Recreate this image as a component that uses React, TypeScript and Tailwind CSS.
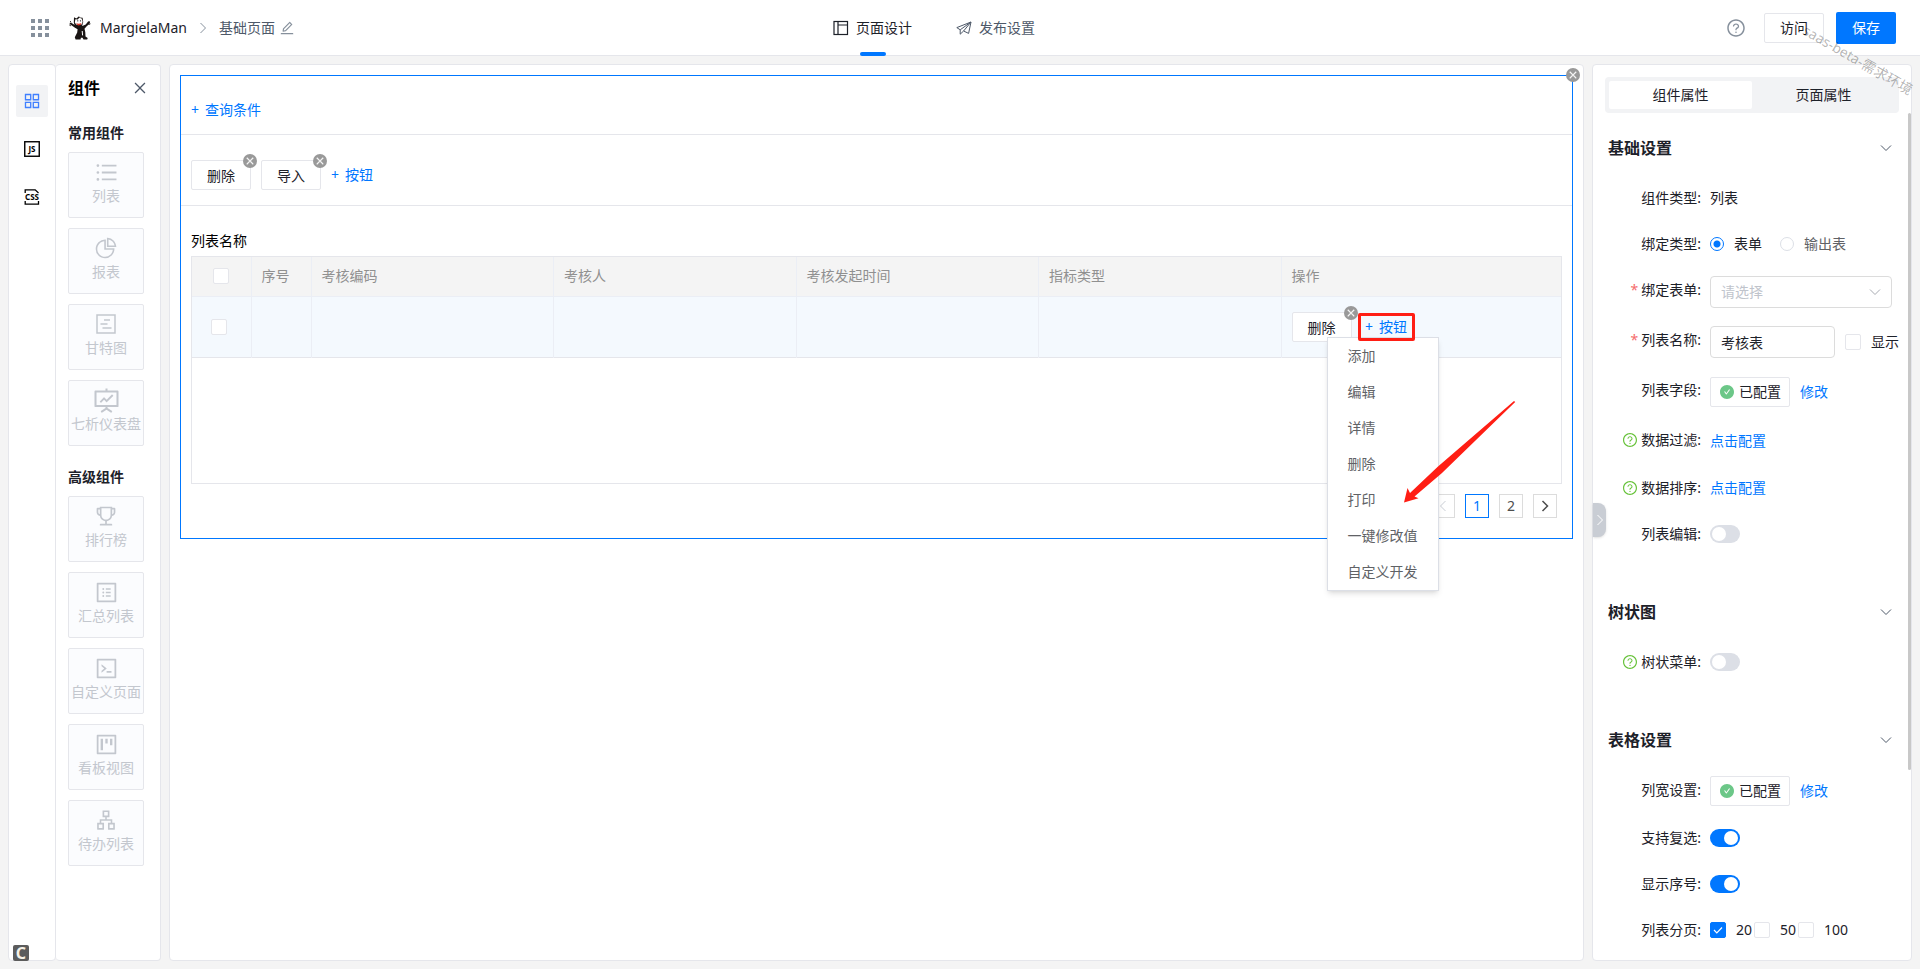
import React from 'react';
import clsx from 'clsx';
import {
  AiFillCheckCircle,
  AiOutlineApartment,
  AiOutlineAppstore,
  AiOutlineClose,
  AiOutlineCode,
  AiOutlineEdit,
  AiOutlineFundProjectionScreen,
  AiOutlinePieChart,
  AiOutlineProfile,
  AiOutlineProject,
  AiOutlineQuestionCircle,
  AiOutlineTrophy,
  AiOutlineUnorderedList,
} from 'react-icons/ai';

const Chevron: React.FC<{ className?: string }> = ({ className }) => (
  <svg className={className} width="12" height="12" viewBox="0 0 12 12" fill="none" stroke="currentColor">
    <path d="m1 3.500 5 5 5-5" />
  </svg>
);

const GanttIcon: React.FC = () => (
  <svg width="20" height="20" viewBox="0 0 20 20" fill="none" stroke="currentColor" strokeWidth="1.5">
    <rect x="1" y="1" width="18" height="18" />
    <path d="M8 6h6M4.500 10h7M6.500 14h9" />
  </svg>
);

const LayoutIcon: React.FC = () => (
  <svg width="16" height="16" viewBox="0 0 16 16" fill="none" stroke="currentColor" strokeWidth="1.2">
    <rect x="1" y="1.500" width="13.500" height="13" />
    <path d="M5 1.500v13M5 5h9.500" />
  </svg>
);

const PlaneIcon: React.FC = () => (
  <svg width="16" height="16" viewBox="0 0 16 16" fill="none" stroke="currentColor" strokeLinejoin="round">
    <path d="M15 2 0.8 7.6l3.4 2.2L15 2 12.6 13.4 7.6 11 15 2" />
    <path d="M4.2 9.8v4.4L7.6 11" />
  </svg>
);

const Logo: React.FC = () => (
  <svg width="22" height="25" viewBox="0 0 22 25">
    <path
      d="M6.5 10.5 3 8.2 1 7.5.6 9l1.8 1.3 3.6 2.5 2.6 1.4-.4 3.4-2.4 4.6.8 2.3h5l.3-1.8h1.6l1 1.8h3.7l.5-1.4-2.2-1.5-.2-4.4-.8-3.4 2.2-2.6 2.6-2.3.8-2.1-1.8-.6-2.6 3.2-3.4 1.6z"
      fill="#1a1514"
    />
    <path d="M4.8 7.4 5 2.200l2.400 1.400 2.600-2.400.8 1.400 2.800.2.6 4.200-1.2 4.6-3.2 1.6-3.6-.6z" fill="#1a1514" />
    <path d="m5.800 7.600.6-3.400 2.400.2 1.400-1.600 2.400.800 1 2.600-.6 3-3.400.800-2.400-.6z" fill="#fff" />
    <path d="M7 8.2q3 1 5.6-.2l-1 2-2.6.6z" fill="#d93226" />
    <circle cx="8.8" cy="5.8" r=".6" />
    <circle cx="11.4" cy="5.8" r=".6" />
    <path d="m.4 10 1.4.8M1.2 6.2l1 1M20.8 6.8l-1.4 1.4M21.4 8.8l-1.6.6" stroke="#1a1514" />
    <path d="m13.2 16 .4 4.4" stroke="#fff" />
  </svg>
);

const JsIcon: React.FC = () => (
  <svg width="16" height="16" viewBox="0 0 16 16">
    <rect x=".75" y=".75" width="14.5" height="14.5" fill="none" stroke="#000" strokeWidth="1.4" />
    <text x="8" y="10.800" textAnchor="middle" fontSize="8" fontWeight="700">JS</text>
  </svg>
);

const CssIcon: React.FC = () => (
  <svg width="16" height="16" viewBox="0 0 16 16" className="overflow-visible">
    <path d="M1.2 4V.8h10l3.3 3.2M1.2 12v3.2h13.3V12" fill="none" stroke="#000" strokeWidth="1.3" />
    <text x="8" y="11" textAnchor="middle" fontSize="8" fontWeight="700">CSS</text>
  </svg>
);

const commonComponents = [
  { name: '列表', icon: <AiOutlineUnorderedList className="text-[25px]" /> },
  { name: '报表', icon: <AiOutlinePieChart className="text-2xl" /> },
  { name: '甘特图', icon: <GanttIcon /> },
  { name: '七析仪表盘', icon: <AiOutlineFundProjectionScreen className="text-[29px]" /> },
];

const advancedComponents = [
  { name: '排行榜', icon: <AiOutlineTrophy className="text-2xl" /> },
  { name: '汇总列表', icon: <AiOutlineProfile className="text-[25px]" /> },
  { name: '自定义页面', icon: <AiOutlineCode className="text-[25px]" /> },
  { name: '看板视图', icon: <AiOutlineProject className="text-[25px]" /> },
  { name: '待办列表', icon: <AiOutlineApartment className="text-[22px]" /> },
];

const columns = ['序号', '考核编码', '考核人', '考核发起时间', '指标类型', '操作'];

const menuItems = ['添加', '编辑', '详情', '删除', '打印', '一键修改值', '自定义开发'];

const ComponentGroup: React.FC<{ title: string; items: typeof commonComponents }> = ({ title, items }) => (
  <section>
    <h3 className="mb-[9px] font-bold leading-5 text-[#1d2129]">{title}</h3>
    <div className="flex flex-col gap-2.5">
      {items.map((item) => (
        <button
          key={item.name}
          className="flex h-[66px] w-[76px] flex-col items-center justify-center gap-1 whitespace-nowrap rounded-xs border border-[#e5e6eb] bg-[#fbfcfe] pb-0.5 text-[#c3c7ce]"
        >
          <span className="flex h-5 items-center">{item.icon}</span>
          <span className="leading-5">{item.name}</span>
        </button>
      ))}
    </div>
  </section>
);

const RemoveBadge: React.FC<{ corner?: boolean }> = ({ corner }) => (
  <button
    aria-label="移除"
    className={clsx(
      'absolute z-10 flex size-3.5 items-center justify-center rounded-full bg-[#999] text-[10px] text-white',
      corner ? '-right-2 -top-2' : '-right-1.5 -top-1.5',
    )}
  >
    <AiOutlineClose strokeWidth={40} />
  </button>
);

const ActionButton: React.FC<{ label: string }> = ({ label }) => (
  <div className="relative">
    <button className="h-[30px] w-[60px] rounded-xs border border-[#e5e6eb] bg-white pt-0.5 text-[#1d2129]">
      {label}
    </button>
    <RemoveBadge />
  </div>
);

const AddButton: React.FC<{ label: string; className?: string }> = ({ label, className }) => (
  <button className={clsx('flex items-center justify-center gap-1.5 whitespace-nowrap text-[#0077ff]', className)}>
    <span>+</span>
    <span>{label}</span>
  </button>
);

const Checkbox: React.FC<{ label?: string; hint?: string; checked?: boolean }> = ({ label, hint, checked }) => (
  <label className="flex items-center gap-2.5">
    <span className="relative flex size-4">
      <input
        type="checkbox"
        aria-label={hint}
        defaultChecked={checked}
        className="peer size-4 appearance-none rounded-xs border border-[#e5e6eb] bg-white checked:border-[#0077ff] checked:bg-[#0077ff]"
      />
      <svg
        className="pointer-events-none absolute inset-0 hidden peer-checked:block"
        viewBox="0 0 16 16"
        fill="none"
        stroke="#fff"
        strokeWidth="1.2"
      >
        <path d="m4 8 2.8 2.8L12 5.5" />
      </svg>
    </span>
    {label}
  </label>
);

const Radio: React.FC<{ label: string; checked?: boolean }> = ({ label, checked }) => (
  <label className={clsx('flex items-center gap-2.5', checked ? 'text-[#1d2129]' : 'text-[#606266]')}>
    <input
      type="radio"
      name="bindType"
      defaultChecked={checked}
      className="size-3.5 appearance-none rounded-full border border-[#dcdfe6] bg-white checked:border-[#0077ff] checked:bg-[radial-gradient(circle,#0077ff_3px,#fff_4px)]"
    />
    {label}
  </label>
);

const Switch: React.FC<{ id: string; checked?: boolean }> = ({ id, checked }) => (
  <input
    id={id}
    type="checkbox"
    role="switch"
    defaultChecked={checked}
    className="flex h-[18px] w-[30px] appearance-none items-center rounded-full bg-[#dcdfe6] px-0.5 before:size-3.5 before:rounded-full before:bg-white checked:justify-end checked:bg-[#0077ff]"
  />
);

interface FieldProps {
  label: string;
  htmlFor?: string;
  required?: boolean;
  help?: boolean;
  size?: 'small' | 'button' | 'large';
  children: React.ReactNode;
}

const Field: React.FC<FieldProps> = ({ label, htmlFor, required, help, size = 'small', children }) => (
  <div className="flex items-start gap-[9px]">
    <label htmlFor={htmlFor} className="flex h-7 w-[108px] shrink-0 items-center justify-end gap-[3px]">
      {required && <span className="text-[#f56c6c]">*</span>}
      {help && <AiOutlineQuestionCircle className="text-base text-[#67c23a]" />}
      {label}:
    </label>
    <div
      className={clsx(
        'flex flex-1 items-center',
        size === 'small' && 'h-7',
        size === 'button' && 'h-[30px]',
        size === 'large' && 'h-8',
      )}
    >
      {children}
    </div>
  </div>
);

const Configured: React.FC = () => (
  <>
    <button className="mr-2.5 flex h-[30px] w-20 items-center justify-center gap-1 rounded-xs border border-[#e5e6eb]">
      <AiFillCheckCircle className="text-base text-[#6cc788]" />
      已配置
    </button>
    <a href="#edit" className="text-[#0077ff]">修改</a>
  </>
);

const Section: React.FC<{ title: string; children: React.ReactNode }> = ({ title, children }) => (
  <section>
    <div className="mb-[22px] flex h-7 items-center justify-between pl-[15px] pr-[19px]">
      <h2 className="text-base font-bold">{title}</h2>
      <button aria-label="收起">
        <Chevron className="text-[#4e5969]" />
      </button>
    </div>
    <div className="flex flex-col gap-[18px]">{children}</div>
  </section>
);

const Header: React.FC = () => (
  <header className="grid h-14 shrink-0 grid-cols-[1fr_auto_1fr] items-center border-b border-[#e5e6eb] bg-white px-6">
    <div className="flex items-center">
      <button aria-label="应用" className="ml-[7px] grid grid-cols-3 gap-[3px]">
        {Array.from({ length: 9 }, (_, i) => (
          <span key={i} className="size-1 bg-[#86909c]" />
        ))}
      </button>
      <span className="ml-5 mr-[9px]">
        <Logo />
      </span>
      <span>MargielaMan</span>
      <Chevron className="mx-2.5 -rotate-90 text-[#86909c]" />
      <span className="text-[#4e5969]">基础页面</span>
      <button aria-label="编辑" className="ml-1">
        <AiOutlineEdit className="text-base text-[#86909c]" />
      </button>
    </div>
    <nav className="flex h-full gap-11 pr-[52px]">
      <a href="#design" className="relative flex items-center gap-[7px]">
        <LayoutIcon />
        页面设计
        <span className="absolute -bottom-px left-1/2 h-1 w-[26px] -translate-x-1/2 rounded-xs bg-[#0077ff]" />
      </a>
      <a href="#publish" className="flex items-center gap-[7px] text-[#4e5969]">
        <PlaneIcon />
        发布设置
      </a>
    </nav>
    <div className="flex items-center justify-end">
      <button aria-label="帮助" className="mr-[18px]">
        <AiOutlineQuestionCircle className="text-xl text-[#86909c]" />
      </button>
      <button className="mr-3 h-[30px] w-[60px] rounded-xs border border-[#e5e6eb]">访问</button>
      <button className="h-8 w-[60px] rounded-xs bg-[#0077ff] text-white">保存</button>
    </div>
  </header>
);

const Sidebar: React.FC = () => (
  <aside className="flex shrink-0">
    <nav className="flex w-12 flex-col items-center gap-4 rounded border border-[#e5e6eb] bg-white pt-5">
      <button aria-label="组件" className="flex size-8 items-center justify-center rounded-xs bg-[#f2f3f5]">
        <AiOutlineAppstore className="text-xl text-[#4080ff]" />
      </button>
      <button aria-label="脚本" className="flex size-8 items-center justify-center">
        <JsIcon />
      </button>
      <button aria-label="样式" className="flex size-8 items-center justify-center">
        <CssIcon />
      </button>
    </nav>
    <div className="w-[105px] rounded border border-l-0 border-[#e5e6eb] bg-white pl-3">
      <div className="mb-3 flex h-[46px] items-center justify-between pr-3">
        <h2 className="text-base font-bold text-black">组件</h2>
        <button aria-label="关闭" className="py-0.5">
          <AiOutlineClose className="text-base text-[#4e5969]" />
        </button>
      </div>
      <div className="flex flex-col gap-[21px]">
        <ComponentGroup title="常用组件" items={commonComponents} />
        <ComponentGroup title="高级组件" items={advancedComponents} />
      </div>
    </div>
  </aside>
);

const AddMenu: React.FC = () => (
  <div className="relative">
    <AddButton label="按钮" className="relative z-30 h-7 w-[57px] rounded-xs border-[3px] border-[#ff1e14]" />
    <ul className="absolute -left-[31px] top-6 z-20 w-28 border border-[#dcdfe6] bg-white shadow-md">
      {menuItems.map((item) => (
        <li key={item}>
          <button className="h-9 w-full pl-5 text-left text-[#606266]">{item}</button>
        </li>
      ))}
    </ul>
    <svg
      className="pointer-events-none absolute left-[46px] top-22 z-30"
      width="112"
      height="103"
      viewBox="0 0 112 103"
      fill="#ff1e14"
    >
      <path d="M0 101.500 3.500 87l2.500 5L34 65.500 110 0l1.200 1L38 72 10.500 95.500l4 1.800z" />
    </svg>
  </div>
);

const ListTable: React.FC = () => (
  <div className="min-h-[228px] border border-[#e5e6eb]">
    <table className="w-full table-fixed border-collapse text-left">
      <colgroup>
        <col className="w-[59px]" />
        <col className="w-[60px]" />
        <col />
        <col />
        <col />
        <col />
        <col className="w-[280px]" />
      </colgroup>
      <thead>
        <tr className="h-[39px] border-b border-[#ebeef5] bg-[#f4f4f4] text-[#909090]">
          <th className="border-r border-[#ebeef5]">
            <div className="flex justify-center">
              <Checkbox hint="全选" />
            </div>
          </th>
          {columns.map((column) => (
            <th key={column} className="border-r border-[#ebeef5] px-2.5 font-normal last:border-r-0">
              {column}
            </th>
          ))}
        </tr>
      </thead>
      <tbody>
        <tr className="h-[61px] border-b border-[#e5e6eb] bg-[#f4f9fe]">
          <td className="border-r border-[#ebeef5] pl-[19px]">
            <Checkbox hint="选择行" />
          </td>
          {columns.slice(0, -1).map((column) => (
            <td key={column} className="border-r border-[#ebeef5]" />
          ))}
          <td className="px-2.5">
            <div className="flex items-center gap-1.5">
              <ActionButton label="删除" />
              <AddMenu />
            </div>
          </td>
        </tr>
      </tbody>
    </table>
  </div>
);

const Pagination: React.FC = () => (
  <nav className="flex justify-end gap-2.5 py-2.5 pr-[5px]">
    <button aria-label="上一页" className="flex size-6 items-center justify-center border border-[#dcdcdc] text-[#c9cdd4]">
      <Chevron className="rotate-90" />
    </button>
    <button className="size-6 border border-[#0077ff] text-[#0077ff]">1</button>
    <button className="size-6 border border-[#dcdcdc] text-[#4e4e4e]">2</button>
    <button aria-label="下一页" className="flex size-6 items-center justify-center border border-[#dcdcdc] text-[#4e4e4e]">
      <Chevron className="-rotate-90 stroke-[1.500]" />
    </button>
  </nav>
);

const Canvas: React.FC = () => (
  <main className="min-w-0 flex-1 rounded border border-[#e5e6eb] bg-white p-2.5">
    <div className="relative border border-[#0077ff] pb-2.5">
      <RemoveBadge corner />
      <div className="border-b border-[#e5e6eb] px-2.5 pb-3.5 pt-6">
        <AddButton label="查询条件" className="leading-5" />
      </div>
      <div className="flex h-[71px] items-center gap-2.5 border-b border-[#e5e6eb] px-2.5 pt-2.5">
        <ActionButton label="删除" />
        <ActionButton label="导入" />
        <AddButton label="按钮" />
      </div>
      <div className="px-2.5 pt-[25px]">
        <h2 className="mb-[5px] leading-5 text-black">列表名称</h2>
        <ListTable />
        <Pagination />
      </div>
    </div>
  </main>
);

const Properties: React.FC = () => (
  <aside className="relative w-80 shrink-0 rounded border border-[#e5e6eb] bg-white">
    <div className="mx-3 mb-[21px] mt-3 flex rounded bg-[#f2f3f5] p-1">
      <button className="h-7 flex-1 rounded-xs bg-white">组件属性</button>
      <button className="h-7 flex-1">页面属性</button>
    </div>
    <div className="flex flex-col gap-[50px]">
      <Section title="基础设置">
        <Field label="组件类型">列表</Field>
        <Field label="绑定类型">
          <div className="flex gap-[18px]">
            <Radio label="表单" checked />
            <Radio label="输出表" />
          </div>
        </Field>
        <Field label="绑定表单" htmlFor="form" required size="large">
          <div className="relative w-[182px]">
            <select
              id="form"
              defaultValue=""
              className="h-8 w-full appearance-none rounded border border-[#dcdcdc] bg-white px-2.5 text-[#c0c4cc]"
            >
              <option value="">请选择</option>
            </select>
            <Chevron className="pointer-events-none absolute right-[11px] top-2.5 text-[#a8abb2]" />
          </div>
        </Field>
        <Field label="列表名称" htmlFor="listName" required size="large">
          <input
            id="listName"
            defaultValue="考核表"
            className="mr-2.5 h-8 w-[125px] rounded border border-[#dcdcdc] px-2.5"
          />
          <Checkbox label="显示" />
        </Field>
        <Field label="列表字段" size="large">
          <Configured />
        </Field>
        <Field label="数据过滤" help size="button">
          <a href="#filter" className="text-[#0077ff]">点击配置</a>
        </Field>
        <Field label="数据排序" help>
          <a href="#sort" className="text-[#0077ff]">点击配置</a>
        </Field>
        <Field label="列表编辑" htmlFor="listEdit">
          <Switch id="listEdit" />
        </Field>
      </Section>
      <Section title="树状图">
        <Field label="树状菜单" htmlFor="treeMenu" help>
          <Switch id="treeMenu" />
        </Field>
      </Section>
      <Section title="表格设置">
        <Field label="列宽设置" size="button">
          <Configured />
        </Field>
        <Field label="支持复选" htmlFor="multiSelect">
          <Switch id="multiSelect" checked />
        </Field>
        <Field label="显示序号" htmlFor="showIndex">
          <Switch id="showIndex" checked />
        </Field>
        <Field label="列表分页">
          <div className="flex gap-0.5">
            <Checkbox label="20" checked />
            <Checkbox label="50" />
            <Checkbox label="100" />
          </div>
        </Field>
      </Section>
    </div>
    <button
      aria-label="收起面板"
      className="absolute left-0 top-[438px] flex h-[34px] w-[13px] items-center justify-center rounded-r-lg bg-[#c9cdd4] text-white shadow"
    >
      <Chevron className="-rotate-90" />
    </button>
    <div className="absolute right-0 top-12 h-[657px] w-[3px] rounded-full bg-[#c8c8c8]" />
  </aside>
);

const App: React.FC = () => (
  <div className="relative flex min-h-screen flex-col overflow-hidden bg-[#f4f4f4] font-['Noto_Sans','Noto_Sans_CJK_SC',sans-serif] text-sm text-[#1d2129]">
    <Header />
    <div className="flex flex-1 gap-2 p-2">
      <Sidebar />
      <Canvas />
      <Properties />
    </div>
    <span className="pointer-events-none absolute right-0 top-[50px] z-40 rotate-[30deg] whitespace-nowrap text-black/30">
      saas-beta-需求环境
    </span>
    <span className="absolute bottom-2 left-[13px] flex size-4 items-center justify-center rounded-xs bg-[#5c5c5c] text-base font-bold leading-4 text-[#f5f1e6]">
      C
    </span>
  </div>
);

export default App;
